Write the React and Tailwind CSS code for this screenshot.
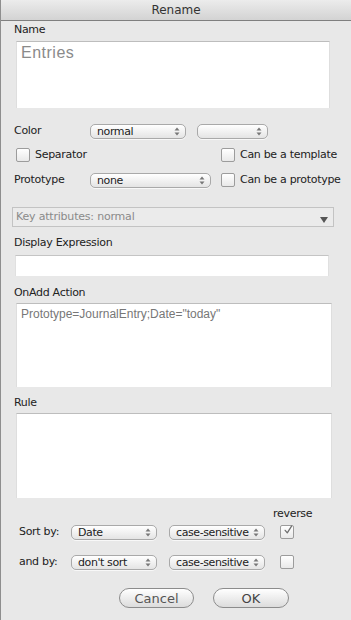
import React from 'react';

function Arrows() {
  return (
    <svg width="6" height="9" viewBox="0 0 6 9" className="shrink-0">
      <path d="M3 0.5 L5.5 3.5 L0.5 3.5 Z" fill="#777" />
      <path d="M3 8.5 L5.5 5.5 L0.5 5.5 Z" fill="#777" />
    </svg>
  );
}

function Select({ label, w }) {
  return (
    <div
      className={`${w} h-[15px] flex items-center justify-between pl-[6px] pr-[5px] rounded-[5px] border border-[#a9a9a9] bg-linear-to-b from-white to-[#e4e4e4] shadow-[0_1px_0_rgba(255,255,255,0.7)]`}
    >
      <span className="text-[11px] leading-[13px] text-[#222] whitespace-nowrap tracking-[-0.4px]">{label}</span>
      <Arrows />
    </div>
  );
}

function Check({ checked }) {
  return (
    <div className="w-[14px] h-[14px] shrink-0 rounded-[2px] border border-[#9c9c9c] bg-linear-to-b from-white to-[#e9e9e9] flex items-center justify-center">
      {checked && (
        <svg width="14" height="14" viewBox="0 0 14 14" className="-mt-[4px] ml-[2px]">
          <path d="M3 7.5 L6 11 L12 1.5" stroke="#6f6f6f" strokeWidth="1.8" fill="none" strokeLinecap="round" strokeLinejoin="round" />
        </svg>
      )}
    </div>
  );
}

function Label({ children, className = '' }) {
  return <div className={`h-[14px] leading-[14px] text-[11px] text-[#222] whitespace-nowrap tracking-[-0.3px] ${className}`}>{children}</div>;
}

export default function App() {
  return (
    <div className="w-[351px] h-[620px] bg-[#e8e8e8] border-l border-[#8e8e8e] overflow-hidden font-['DejaVu_Sans',sans-serif]">
      {/* title bar */}
      <div className="h-[21px] bg-linear-to-b from-[#ececec] to-[#d3d3d3] border-b border-[#7f7f7f] flex items-center justify-center">
        <span className="text-[12px] text-[#333]">Rename</span>
      </div>

      <Label className="mt-[2px] ml-[13px]">Name</Label>
      <div className="mt-[4px] ml-[15px] w-[314px] h-[67px] bg-white border-t border-[#bdbdbd] border-x border-x-[#dedede] pl-[4px] pt-[1px]">
        <div className="text-[16px] leading-[20px] text-[#8a8a8a] font-['Liberation_Sans',sans-serif] tracking-[0.5px]">Entries</div>
      </div>

      {/* color row */}
      <div className="mt-[15px] h-[16px] flex items-center">
        <Label className="ml-[13px] w-[76px]">Color</Label>
        <Select label="normal" w="w-[96px]" />
        <div className="ml-[11px]"><Select label="" w="w-[71px]" /></div>
      </div>

      {/* separator row */}
      <div className="mt-[8px] h-[16px] flex items-center">
        <div className="ml-[15px]"><Check /></div>
        <Label className="ml-[5px] w-[186px] shrink-0">Separator</Label>
        <Check />
        <Label className="ml-[5px]">Can be a template</Label>
      </div>

      {/* prototype row */}
      <div className="mt-[9px] h-[16px] flex items-center">
        <Label className="ml-[13px] w-[76px]">Prototype</Label>
        <Select label="none" w="w-[121px]" />
        <div className="ml-[10px]"><Check /></div>
        <Label className="ml-[5px]">Can be a prototype</Label>
      </div>

      {/* key attributes */}
      <div className="mt-[19px] ml-[11px] w-[322px] h-[20px] bg-[#ebebeb] border border-[#c3c3c3] flex items-center justify-between pl-[3px] pr-[5px]">
        <span className="text-[11px] text-[#8a8a8a] tracking-[-0.2px]">Key attributes: normal</span>
        <svg width="8" height="6" viewBox="0 0 8 6" className="mt-[6px]">
          <path d="M0 0 L8 0 L4 6 Z" fill="#555" />
        </svg>
      </div>

      <Label className="mt-[9px] ml-[13px]">Display Expression</Label>
      <div className="mt-[5px] ml-[14px] w-[314px] h-[21px] bg-white border-t border-[#c4c4c4] border-x border-x-[#e0e0e0]" />

      <Label className="mt-[10px] ml-[13px]">OnAdd Action</Label>
      <div className="mt-[3px] ml-[15px] w-[316px] h-[84px] bg-white border-t border-[#bdbdbd] border-x border-x-[#dedede] pl-[4px] pt-[2px]">
        <div className="text-[12px] leading-[16px] text-[#777] font-['Liberation_Sans',sans-serif]">Prototype=JournalEntry;Date="today"</div>
      </div>

      <Label className="mt-[9px] ml-[13px]">Rule</Label>
      <div className="mt-[3px] ml-[15px] w-[316px] h-[85px] bg-white border-t border-[#bdbdbd] border-x border-x-[#dedede]" />

      <Label className="mt-[9px] ml-[272px]">reverse</Label>

      {/* sort rows */}
      <div className="mt-[3px] h-[16px] flex items-center">
        <Label className="ml-[18px] w-[52px]">Sort by:</Label>
        <Select label="Date" w="w-[86px]" />
        <div className="ml-[12px]"><Select label="case-sensitive" w="w-[96px]" /></div>
        <div className="ml-[15px]"><Check checked /></div>
      </div>
      <div className="mt-[14px] h-[16px] flex items-center">
        <Label className="ml-[18px] w-[52px]">and by:</Label>
        <Select label="don't sort" w="w-[86px]" />
        <div className="ml-[12px]"><Select label="case-sensitive" w="w-[96px]" /></div>
        <div className="ml-[15px]"><Check /></div>
      </div>

      {/* buttons */}
      <div className="mt-[18px] h-[20px] flex items-center">
        <button className="ml-[118px] w-[75px] h-[20px] rounded-full border border-[#8c8c8c] bg-linear-to-b from-white to-[#dcdcdc] text-[13px] text-[#555]">
          Cancel
        </button>
        <button className="ml-[19px] w-[76px] h-[20px] rounded-full border border-[#8c8c8c] bg-linear-to-b from-white to-[#dcdcdc] text-[13px] text-[#444]">
          OK
        </button>
      </div>
    </div>
  );
}
